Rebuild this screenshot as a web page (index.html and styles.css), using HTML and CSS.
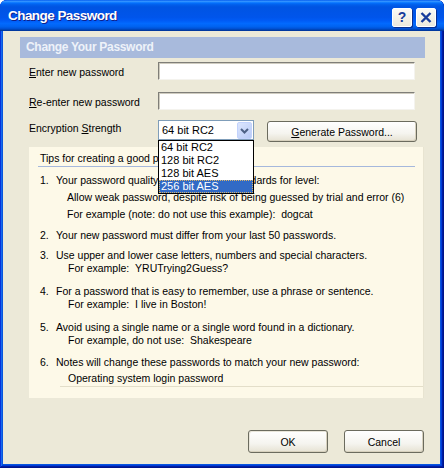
FILE: index.html
```html
<!DOCTYPE html>
<html>
<head>
<meta charset="utf-8">
<title>Change Password</title>
<link rel="stylesheet" href="styles.css">
</head>
<body>
<div class="window">
  <div class="titlebar">
    <span class="title">Change Password</span>
    <div class="caption-buttons">
      <span class="cap-btn help">?</span>
      <span class="cap-btn close"><svg width="12" height="11" viewBox="0 0 12 11"><path d="M1.5 1 L10.5 10 M10.5 1 L1.5 10" stroke="#173C9B" stroke-width="2.4" fill="none"/></svg></span>
    </div>
  </div>
  <div class="client">
    <div class="section-header">Change Your Password</div>
    <div class="field-row r1">
      <span class="field-label"><u>E</u>nter new password</span>
      <span class="textbox"></span>
    </div>
    <div class="field-row r2">
      <span class="field-label"><u>R</u>e-enter new password</span>
      <span class="textbox"></span>
    </div>
    <div class="field-row r3">
      <span class="field-label">Encryption <u>S</u>trength</span>
      <div class="combo">
        <span class="combo-value">64 bit RC2</span>
        <span class="combo-arrow"><svg width="9" height="6" viewBox="0 0 9 6"><path d="M1 1 L4.5 4.5 L8 1" stroke="#4D6185" stroke-width="2" fill="none"/></svg></span>
        <ul class="combo-list">
          <li>64 bit RC2</li>
          <li>128 bit RC2</li>
          <li>128 bit AES</li>
          <li class="sel">256 bit AES</li>
        </ul>
      </div>
      <span class="btn gen"><span><u>G</u>enerate Password...</span></span>
    </div>
    <div class="tips">
      <div class="tips-head">Tips for creating a good password:</div>
      <div class="tip t1">
        <span class="num">1.</span>
        <div class="tip-body">
          <div>Your password quality must meet the standards for level:</div>
          <div class="sub sub1">Allow weak password, despite risk of being guessed by trial and error (6)</div>
          <div class="sub sub1">For example (note: do not use this example): &nbsp;dogcat</div>
        </div>
      </div>
      <div class="tip t2">
        <span class="num">2.</span>
        <div class="tip-body">
          <div>Your new password must differ from your last 50 passwords.</div>
        </div>
      </div>
      <div class="tip t3">
        <span class="num">3.</span>
        <div class="tip-body">
          <div>Use upper and lower case letters, numbers and special characters.</div>
          <div class="sub">For example: &nbsp;YRUTrying2Guess?</div>
        </div>
      </div>
      <div class="tip t4">
        <span class="num">4.</span>
        <div class="tip-body">
          <div>For a password that is easy to remember, use a phrase or sentence.</div>
          <div class="sub">For example: &nbsp;I live in Boston!</div>
        </div>
      </div>
      <div class="tip t5">
        <span class="num">5.</span>
        <div class="tip-body">
          <div>Avoid using a single name or a single word found in a dictionary.</div>
          <div class="sub">For example, do not use: &nbsp;Shakespeare</div>
        </div>
      </div>
      <div class="tip t6">
        <span class="num">6.</span>
        <div class="tip-body">
          <div>Notes will change these passwords to match your new password:</div>
          <div class="sub sub6">Operating system login password</div>
        </div>
      </div>
    </div>
    <div class="footer">
      <span class="btn dlg ok">OK</span>
      <span class="btn dlg">Cancel</span>
    </div>
  </div>
</div>
</body>
</html>
```
FILE: styles.css
```css
* { box-sizing: border-box; }

body {
  margin: 0;
  background: #ffffff;
  font-family: "Liberation Sans", Arial, sans-serif;
  font-size: 10.5px;
  color: #000;
}

.window {
  width: 444px;
  height: 468px;
  display: flex;
  flex-direction: column;
  background: #0855DD;
  border-radius: 7px 7px 0 0;
  overflow: hidden;
  box-shadow: inset -1px -1px #00138c, inset 1px 1px #0831d9, inset -2px -2px #001ea0, inset 2px 2px #166aee, inset -3px -3px #003bda, inset 3px 3px #0855dd;
}

.titlebar {
  flex: none;
  height: 31px;
  display: flex;
  align-items: flex-start;
  padding: 0 8px;
  background: linear-gradient(180deg, #0058EE 0%, #3593FF 4%, #288EFF 6%, #127DFF 8%, #036FFC 10%, #0262EE 14%, #0057E5 20%, #0054E3 24%, #0055EB 56%, #005BF5 66%, #026AFE 76%, #0062EF 86%, #0052D6 92%, #0040AB 97%, #003092 100%);
}

.title {
  margin-top: 8px;
  line-height: 16px;
  font-size: 13.5px;
  font-weight: bold;
  color: #fff;
  letter-spacing: -0.55px;
  text-shadow: 1px 1px 0 #0F1F8A;
}

.caption-buttons {
  margin-left: auto;
  margin-top: 8px;
  display: flex;
  gap: 4px;
}

.cap-btn {
  width: 20px;
  height: 19px;
  display: flex;
  align-items: center;
  justify-content: center;
  border: 1px solid #ffffff;
  border-radius: 2px;
  background: linear-gradient(#FBFAF6, #ECE9DC);
  box-shadow: 1px 1px 0 #0A2F8E;
}

.help {
  font-size: 14px;
  font-weight: bold;
  color: #173C9B;
  line-height: 17px;
}

.client {
  flex: 1;
  margin: 0 4px 4px 3px;
  background: #ECE9D8;
  display: flex;
  flex-direction: column;
}

.section-header {
  margin: 6px 15px 0 17px;
  height: 21px;
  line-height: 21px;
  padding-left: 6px;
  background: #A8BADC;
  color: #EEF2F9;
  font-size: 12px;
  font-weight: bold;
  letter-spacing: -0.3px;
}

.field-row {
  display: flex;
  align-items: flex-start;
  margin-left: 26px;
}

.r1 { margin-top: 4px; height: 18px; }
.r2 { margin-top: 12px; height: 18px; }
.r3 { margin-top: 10px; height: 22px; }

.field-label {
  width: 129px;
  flex: none;
  line-height: 13px;
  margin-top: 4px;
  white-space: nowrap;
}

.r3 .field-label { margin-top: 2px; }

.textbox {
  width: 257px;
  height: 18px;
  background: #fff;
  border: 1px solid;
  border-color: #7F7E78 #F4F3EE #F4F3EE #7F7E78;
  box-shadow: inset 1px 1px 0 #CFCCC0;
}

.combo {
  position: relative;
  width: 96px;
  height: 20px;
  display: flex;
  background: #fff;
  border: 1px solid #7F9DB9;
}

.combo-value {
  flex: 1;
  padding-left: 3px;
  line-height: 18px;
  font-size: 11px;
  white-space: nowrap;
}

.combo-arrow {
  width: 15px;
  height: 17px;
  margin: 1px 1px 0 0;
  display: flex;
  align-items: center;
  justify-content: center;
  border: 1px solid #C3D3FD;
  border-radius: 2px;
  background: linear-gradient(135deg, #DCE6FE, #B9CBF6);
}

.combo-list {
  position: absolute;
  z-index: 5;
  top: calc(100% + 1px);
  left: -1px;
  width: 96px;
  margin: 0;
  padding: 0;
  list-style: none;
  background: #fff;
  border: 1px solid #000;
  font-size: 11px;
}

.combo-list li {
  height: 13px;
  line-height: 13px;
  padding-left: 2px;
  white-space: nowrap;
}

.combo-list li.sel {
  background: #316AC5;
  color: #fff;
  outline: 1px dotted #D9B36A;
  outline-offset: -1px;
}

.btn {
  display: flex;
  align-items: center;
  justify-content: center;
  border: 1px solid #6B6B5E;
  border-radius: 3px;
  background: linear-gradient(#FFFFFF 0%, #F5F4EF 60%, #E6E2D3 100%);
  box-shadow: inset -1px -1px 0 #D7D1BE;
  white-space: nowrap;
}

.gen {
  margin-left: 13px;
  margin-top: 1px;
  width: 150px;
  height: 21px;
}

.tips {
  margin: 5px 16px 0 26px;
  height: 251px;
  padding: 5px 8px 0 11px;
  background: #FDF9E8;
  border-right: 1px solid #E8E4D1;
}

.tips-head {
  margin-left: -2px;
  padding-left: 2px;
  line-height: 13px;
  padding-bottom: 1px;
  border-bottom: 1px solid #A5B8DC;
  white-space: nowrap;
}

.tip {
  display: flex;
  line-height: 13px;
  white-space: nowrap;
}

.num {
  width: 16px;
  flex: none;
}

.tip-body { flex: 1; }

.t1 { margin-top: 7px; }
.t2 { margin-top: 8px; }
.t3 { margin-top: 7px; }
.t4 { margin-top: 10px; }
.t5 { margin-top: 10px; }
.t6 { margin-top: 9px; }

.sub { padding-left: 12px; }

.sub1 {
  padding-left: 11px;
  margin-top: 4px;
}

.sub6 {
  margin-top: 3px;
  margin-left: 4px;
  margin-right: -8px;
  padding-left: 8px;
  padding-bottom: 1px;
  border-bottom: 1px solid #E3DEC9;
}

.footer {
  display: flex;
  justify-content: flex-end;
  gap: 16px;
  margin: 32px 16px 0 0;
}

.dlg {
  width: 80px;
  height: 23px;
}

.ok {
  box-shadow: inset -1px -1px 0 #D7D1BE, inset 1px 1px 0 #E9E6DA;
}
```
